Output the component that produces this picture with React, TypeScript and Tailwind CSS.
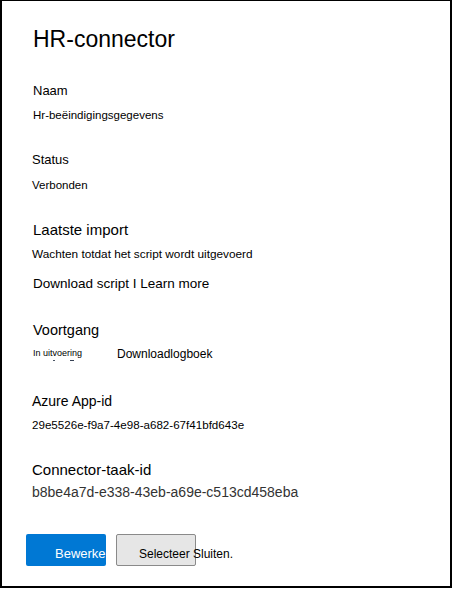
import React from 'react';

const font = { fontFamily: '"Liberation Sans", Arial, sans-serif' };

const Field: React.FC<{ label: string; labelSize: string; className?: string; children: React.ReactNode }> = ({ label, labelSize, className, children }) => (
    <div className={className}>
        <p className={`leading-none text-black ${labelSize}`}>{label}</p>
        {children}
    </div>
);

const App: React.FC = () => {
    return (
        <div className="w-[453px] h-[589px] bg-white" style={font}>
            <div className="w-[452px] h-[588px] border-x-2 border-b-2 border-t border-black pl-[24px] pt-[27px] flex flex-col">
                <div className="pl-[6px]">
                    <h1 className="text-[23px] leading-none text-black ml-[1px]">HR-connector</h1>

                    <Field label="Naam" labelSize="text-[13px] ml-[1px]" className="mt-[33px]">
                        <p className="mt-[13px] text-[11.5px] leading-none text-black ml-[1px]">Hr-beëindigingsgegevens</p>
                    </Field>

                    <Field label="Status" labelSize="text-[13px]" className="mt-[31px]">
                        <p className="mt-[14px] text-[11.5px] leading-none text-black">Verbonden</p>
                    </Field>

                    <Field label="Laatste import" labelSize="text-[15px] ml-[1px]" className="mt-[31px]">
                        <p className="mt-[12px] text-[11.8px] leading-none text-black">Wachten totdat het script wordt uitgevoerd</p>
                        <p className="mt-[16px] text-[13.5px] leading-none text-black ml-[1px]">Download script I Learn more</p>
                    </Field>

                    <Field label="Voortgang" labelSize="text-[14.5px] ml-[1px]" className="mt-[33px]">
                        <div className="mt-[10px] flex items-start">
                            <div className="w-[84px] pt-[1px] ml-[1px]">
                                <p className="text-[9px] leading-none text-black">In uitvoering</p>
                                <div className="flex items-center h-[4px] mt-[1px]">
                                    <span className="ml-[20px] w-[2px] h-[1px] bg-gray-600" />
                                    <span className="ml-[15px] w-[4px] h-[1px] bg-gray-700" />
                                </div>
                            </div>
                            <p className="text-[12px] leading-none text-black">Downloadlogboek</p>
                        </div>
                    </Field>

                    <Field label="Azure App-id" labelSize="text-[14px]" className="mt-[31px]">
                        <p className="mt-[11px] text-[11.6px] leading-none text-black">29e5526e-f9a7-4e98-a682-67f41bfd643e</p>
                    </Field>

                    <Field label="Connector-taak-id" labelSize="text-[15px]" className="mt-[32px]">
                        <p className="mt-[8px] text-[14px] leading-none text-[#333333]">b8be4a7d-e338-43eb-a69e-c513cd458eba</p>
                    </Field>
                </div>

                <div className="mt-[35px] flex gap-[10px]">
                    <button className="w-[80px] h-[32px] rounded-[2px] bg-[#0078d4] text-white text-[13px] leading-none overflow-hidden whitespace-nowrap flex items-start pt-[13px] pl-[29px]">
                        Bewerken
                    </button>
                    <button className="w-[80px] h-[32px] rounded-[2px] bg-[#e6e6e6] border border-[#8a8a8a] text-black text-[12px] leading-none whitespace-nowrap flex items-start pt-[13px] pl-[22px] overflow-visible">
                        Selecteer Sluiten.
                    </button>
                </div>
            </div>
        </div>
    );
};

export default App;
